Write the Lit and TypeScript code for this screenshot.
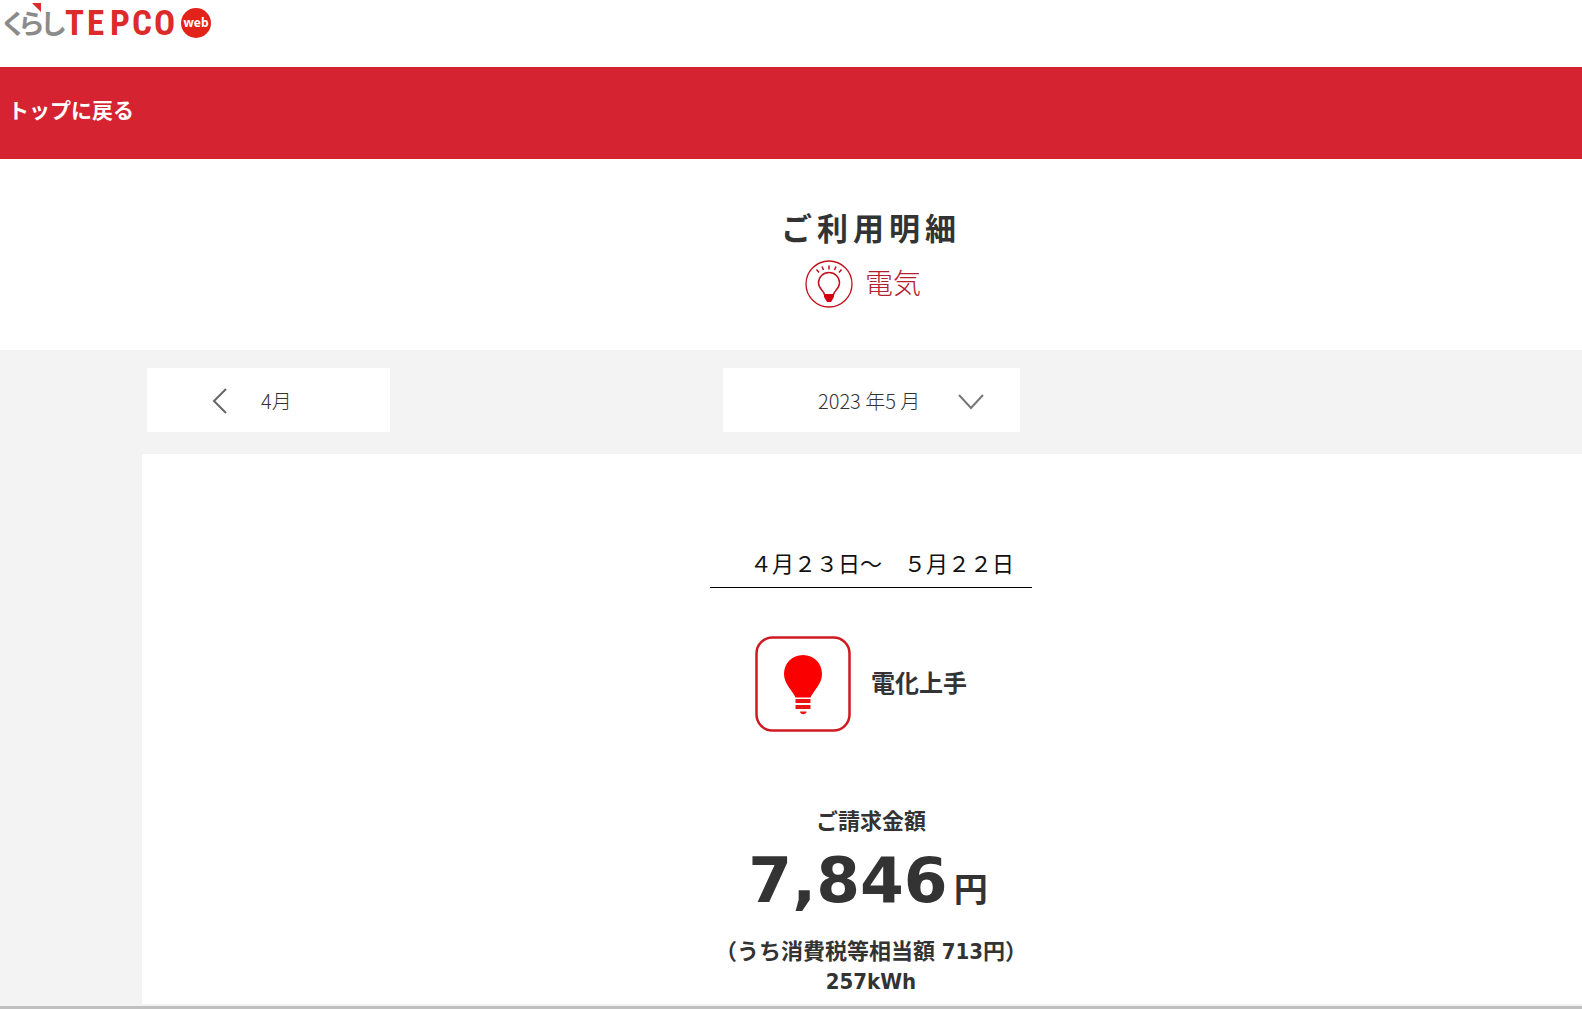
import { LitElement, html, css } from "lit";
import { customElement, state } from "lit/decorators.js";

@customElement("tepco-logo")
class TepcoLogo extends LitElement {
  static styles = css`
    :host {
      display: block;
    }
    .logo {
      display: block;
    }
    .kana {
      font: 700 27px "Noto Sans CJK JP", sans-serif;
      fill: #8b8b8b;
    }
    .name {
      font: 700 35px "Liberation Sans Narrow", "Roboto Condensed", "Liberation Sans", sans-serif;
      fill: #dd2a2b;
    }
    .web {
      font: 700 12px "Open Sans", sans-serif;
      fill: #fff;
      text-anchor: middle;
    }
  `;

  render() {
    return html`
      <svg class="logo" width="216" height="44" viewBox="0 0 216 44" role="img" aria-label="くらしTEPCO web">
        <text class="kana" x="0 18 40" y="34">くらし</text>
        <path d="M32 3h9v9z" fill="#dd2a2b" />
        <text class="name" x="65 87 110 132 154" y="35">TEPCO</text>
        <circle cx="196" cy="23" r="15" fill="#e2231a" />
        <text class="web" x="196" y="27">web</text>
      </svg>
    `;
  }
}

@customElement("app-root")
class AppRoot extends LitElement {
  @state() private month = "2023-05";

  static styles = css`
    :host {
      display: flex;
      flex-direction: column;
      min-height: 100vh;
      box-sizing: border-box;
      border-bottom: 3px solid #c0c0c0;
      background: #fff;
      color: #333;
      font-family: "Noto Sans CJK JP", sans-serif;
    }
    * {
      box-sizing: border-box;
    }
    .header {
      height: 67px;
    }
    .bar {
      display: flex;
      align-items: center;
      height: 92px;
      padding: 0 8px 8px;
      background: #d52332;
    }
    .back {
      color: #fff;
      font-size: 21px;
      line-height: 32px;
      font-weight: 700;
      text-decoration: none;
    }
    .hero {
      display: flex;
      flex-direction: column;
      align-items: center;
      height: 191px;
      padding: 46px 0 0 160px;
    }
    .title {
      margin: 0;
      font-size: 31px;
      line-height: 44px;
      font-weight: 700;
      letter-spacing: 5px;
    }
    .kind {
      display: flex;
      align-items: center;
      gap: 12px;
      margin-top: 11px;
      padding-right: 16px;
      color: #b3202f;
      font-size: 28px;
      line-height: 44px;
      font-weight: 300;
    }
    .kind-name {
      padding-bottom: 4px;
    }
    .icon {
      display: block;
      flex: none;
    }
    .body {
      display: flex;
      flex: 1;
      flex-direction: column;
      gap: 22px;
      padding: 18px 0 2px 142px;
      background: #f3f3f3;
    }
    .months {
      display: grid;
      grid-template-columns: 243px 1fr 229px;
      padding-left: 5px;
      align-items: center;
    }
    .prev {
      display: flex;
      align-items: center;
      gap: 32px;
      height: 64px;
      padding: 0 0 0 64px;
      border: 0;
      background: #fff;
      color: #333;
      font-family: inherit;
      font-size: 20px;
      font-weight: 300;
      cursor: pointer;
    }
    .picker {
      display: grid;
      justify-self: center;
      align-items: center;
      width: 297px;
    }
    .select,
    .chevron {
      grid-area: 1 / 1;
    }
    .select {
      width: 100%;
      height: 64px;
      padding: 0 0 0 95px;
      border: 0;
      border-radius: 0;
      background: #fff;
      color: #333;
      appearance: none;
      font-family: inherit;
      font-size: 20px;
      font-weight: 300;
    }
    .chevron {
      justify-self: end;
      margin: 4px 36px 0 0;
      pointer-events: none;
    }
    .panel {
      display: flex;
      flex: 1;
      flex-direction: column;
      align-items: center;
      padding: 90px 0 4px 18px;
      background: #fff;
    }
    .period {
      margin: 0;
      padding: 0 18px 7px;
      border-bottom: 1px solid #000;
      color: #111;
      font-size: 22px;
      line-height: 36px;
      white-space: pre;
    }
    .plan {
      display: flex;
      align-items: center;
      gap: 20px;
      margin: 48px 0 0;
      padding-right: 20px;
      font-size: 24px;
      line-height: 36px;
      font-weight: 700;
    }
    .plan-name {
      padding-bottom: 4px;
    }
    .label {
      margin: 71px 0 0;
      font-size: 22px;
      line-height: 32px;
      font-weight: 700;
    }
    .amount {
      display: flex;
      align-items: baseline;
      gap: 6px;
      margin: 4px 0 0;
      padding-right: 6px;
      font-family: "DejaVu Sans", "Noto Sans CJK JP", sans-serif;
      font-size: 63px;
      line-height: 84px;
      font-weight: 700;
    }
    .yen {
      font-size: 34px;
    }
    .detail {
      margin: 5px 0 0;
      font-family: "DejaVu Sans Condensed", "Noto Sans CJK JP", sans-serif;
      font-size: 22px;
      line-height: 30px;
      font-weight: 700;
      text-align: center;
    }
  `;

  private onMonth(e: Event) {
    this.month = (e.target as HTMLSelectElement).value;
  }

  render() {
    return html`
      <header class="header"><tepco-logo></tepco-logo></header>
      <nav class="bar"><a class="back" href="#top">トップに戻る</a></nav>
      <section class="hero">
        <h1 class="title">ご利用明細</h1>
        <div class="kind">
          <svg class="icon" width="48" height="48" viewBox="0 0 48 48" fill="none" stroke="#c3101c" aria-hidden="true">
            <circle cx="24" cy="24" r="23" stroke-width="1.3" />
            <path
              d="M19.500 35c0-4-6-6-6-12a10.500 10.500 0 0 1 21 0c0 6-6 8-6 12"
              stroke-width="1.500"
            />
            <path d="M19 34h10v3l-3 5h-4l-3-5z" fill="#d40012" stroke="none" />
            <path d="M11.500 9.500l2.500 3M17 6.500l1.500 3.500M24 5.500v4M31 6.500l-1.500 3.500M36.500 9.500l-2.500 3" stroke-width="1.500" />
          </svg>
          <span class="kind-name">電気</span>
        </div>
      </section>
      <main class="body">
        <div class="months">
          <button class="prev" type="button">
            <svg class="icon" width="18" height="28" viewBox="0 0 18 28" fill="none" stroke="#666" stroke-width="2" aria-hidden="true">
              <path d="M15 3L3 15l12 12" />
            </svg>
            <span>4月</span>
          </button>
          <div class="picker">
            <select class="select" aria-label="表示月" .value=${this.month} @change=${this.onMonth}>
              <option value="2023-05">2023 年5 月</option>
            </select>
            <svg class="chevron" width="26" height="16" viewBox="0 0 26 16" fill="none" stroke="#777" stroke-width="2" aria-hidden="true">
              <path d="M1 1l12 13L25 1" />
            </svg>
          </div>
        </div>
        <section class="panel">
          <p class="period">　４月２３日～　５月２２日</p>
          <h2 class="plan">
            <svg class="icon" width="96" height="96" viewBox="0 0 96 96" aria-hidden="true">
              <rect x="1.500" y="1.500" width="93" height="93" rx="16" fill="none" stroke="#cf1a22" stroke-width="2.500" />
              <path
                d="M48 19c-11 0-19 8.500-19 19 0 5 2 9 5 13.500 3 4.500 5.500 7.500 6.500 10h15c1-2.500 3.500-5.500 6.500-10 3-4.500 5-8.500 5-13.500 0-10.500-8-19-19-19z"
                fill="#fb0000"
              />
              <path d="M40.500 63h15v4h-15zM40.500 69h15v4h-15zM45 75.500h6.500c0 1.700-1.500 2.700-3.200 2.700S45 77.200 45 75.500z" fill="#e81414" />
            </svg>
            <span class="plan-name">電化上手</span>
          </h2>
          <p class="label">ご請求金額</p>
          <p class="amount"><span>7,846</span><span class="yen">円</span></p>
          <p class="detail">（うち消費税等相当額 713円）<br />257kWh</p>
        </section>
      </main>
    `;
  }
}
